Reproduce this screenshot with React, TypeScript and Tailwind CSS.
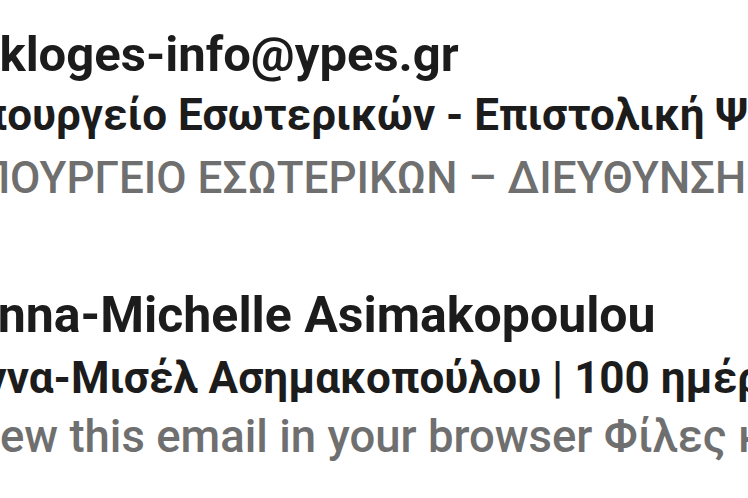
import React from "react";

const sender = "font-['Roboto',sans-serif] font-bold leading-[64px] text-[#1c1c1c] whitespace-nowrap";
const subject = "font-['Roboto',sans-serif] font-bold text-[44px] text-[#1c1c1c] whitespace-nowrap";
const snippet = "font-['Roboto',sans-serif] font-medium text-[#6f6f6f] whitespace-nowrap";

export default function App() {
  return (
    <div className="w-[748px] h-[498px] overflow-hidden bg-white">
      <div className="flex flex-col pt-[23px]">
        <div className={`${sender} text-[49px] -ml-[27px]`}>ekloges-info@ypes.gr</div>
        <div className={`${subject} leading-[56px] -ml-[48px]`}>
          Υπουργείο Εσωτερικών - Επιστολική Ψήφος
        </div>
        <div className={`${snippet} text-[44px] leading-[70px] -ml-[48px]`}>
          ΥΠΟΥΡΓΕΙΟ ΕΣΩΤΕΡΙΚΩΝ – ΔΙΕΥΘΥΝΣΗ ΕΚΛΟΓΩΝ
        </div>

        <div className={`${sender} text-[50px] mt-[70px] -ml-[35px]`}>Anna-Michelle Asimakopoulou</div>
        <div className={`${subject} leading-[62px] -ml-[44px]`}>
          Άννα-Μισέλ Ασημακοπούλου | 100 ημέρες
        </div>
        <div className={`${snippet} text-[45.5px] leading-[56px] -ml-[41px]`}>
          View this email in your browser Φίλες και φίλοι
        </div>
      </div>
    </div>
  );
}
